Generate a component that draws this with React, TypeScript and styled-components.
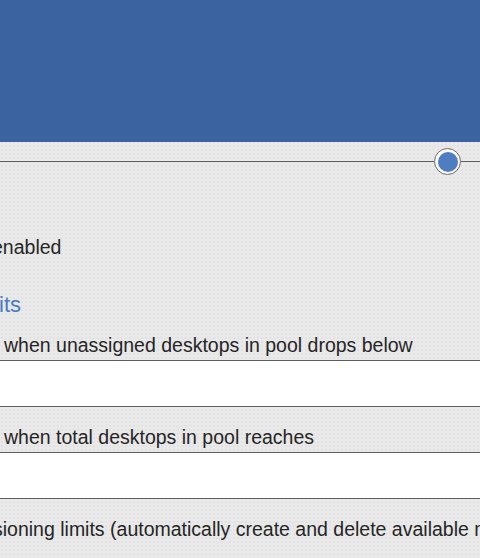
import React from "react";
import styled, { createGlobalStyle } from "styled-components";

const GlobalStyle = createGlobalStyle`
  html, body {
    margin: 0;
    padding: 0;
    width: 480px;
    height: 558px;
    overflow: hidden;
    background-color: #e9e9e9;
  }
  body {
    font-family: "Liberation Sans", Arial, sans-serif;
    color: #262626;
  }
`;

const Page = styled.div`
  width: 480px;
  height: 558px;
  overflow: hidden;
  display: flex;
  flex-direction: column;
  background-color: #e9e9e9;
  background-image: radial-gradient(circle, rgba(0, 0, 0, 0.03) 0.8px, transparent 1px);
  background-size: 4px 4px;
`;

const Header = styled.header`
  height: 142px;
  flex: none;
  background: #3a63a0;
`;

const SliderRow = styled.div`
  height: 39px;
  flex: none;
  display: flex;
  align-items: center;
`;

const Track = styled.div<{ $grow?: boolean; $w?: number }>`
  height: 1px;
  background: #5e5e5e;
  flex: ${(p) => (p.$grow ? "1" : "none")};
  width: ${(p) => (p.$w ? `${p.$w}px` : "auto")};
`;

const Handle = styled.div`
  width: 27px;
  height: 27px;
  box-sizing: border-box;
  border-radius: 50%;
  border: 1.5px solid #6a6a6a;
  background: #fafafa;
  display: flex;
  align-items: center;
  justify-content: center;
  flex: none;
`;

const HandleDot = styled.div`
  width: 20px;
  height: 20px;
  border-radius: 50%;
  background: #4f7ec0;
`;

const Content = styled.div`
  display: flex;
  flex-direction: column;
  padding-top: 54px;
`;

const Line = styled.div<{ $shift?: number; $mt?: number }>`
  font-size: 19.5px;
  line-height: 24px;
  height: 24px;
  white-space: nowrap;
  margin-left: ${(p) => p.$shift ?? 0}px;
  margin-top: ${(p) => p.$mt ?? 0}px;
  color: #262626;
`;

const SectionTitle = styled.div`
  font-size: 22px;
  line-height: 24px;
  height: 24px;
  white-space: nowrap;
  margin-left: -1px;
  margin-top: 34px;
  margin-bottom: 1px;
  color: #4a7bc3;
`;

const Field = styled.input`
  display: block;
  box-sizing: border-box;
  height: 47px;
  margin: 3px -10px 0 -10px;
  width: calc(100% + 20px);
  border: 1px solid #5e5e5e;
  background: #ffffff;
  outline: none;
  font: inherit;
  padding: 0 12px;
`;

export default function App() {
  return (
    <>
      <GlobalStyle />
      <Page>
        <Header />
        <SliderRow>
          <Track $grow />
          <Handle>
            <HandleDot />
          </Handle>
          <Track $w={19} />
        </SliderRow>
        <Content>
          <Line $shift={-8}>enabled</Line>
          <SectionTitle>its</SectionTitle>
          <Line $shift={4} $mt={15}>
            when unassigned desktops in pool drops below
          </Line>
          <Field type="text" />
          <Line $shift={4} $mt={18}>
            when total desktops in pool reaches
          </Line>
          <Field type="text" />
          <Line $shift={-7} $mt={18}>
            sioning limits (automatically create and delete available machines)
          </Line>
        </Content>
      </Page>
    </>
  );
}
